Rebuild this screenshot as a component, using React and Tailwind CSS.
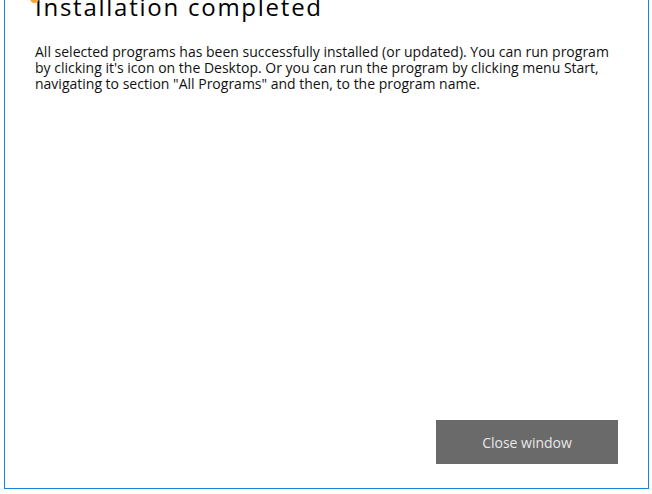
import React from 'react';

const App = () => {
    return (
        <div className="w-[652px] h-[494px] bg-white overflow-hidden" style={{ fontFamily: '"Open Sans", "Noto Sans", sans-serif' }}>
            {/* Window frame, top edge is outside the capture */}
            <div className="relative ml-[4px] w-[645px] h-[489px] border-x border-b border-[#1883d7] flex flex-col">
                {/* cropped app icon peeking in at the top */}
                <div className="absolute left-[25px] top-[-6px] w-[9px] h-[9px] rounded-full bg-[#f6a53a]" />

                <div className="pl-[30px] pr-[20px]">
                    <h1 className="mt-[-9px] text-[24px] leading-[32px] font-normal text-black tracking-[1.75px]">
                        Installation completed
                    </h1>
                    <p className="mt-[21px] text-[14px] leading-[16px] text-[#111] whitespace-nowrap">
                        All selected programs has been successfully installed (or updated). You can run program<br />
                        by clicking it's icon on the Desktop. Or you can run the program by clicking menu Start,<br />
                        navigating to section "All Programs" and then, to the program name.
                    </p>
                </div>

                <div className="mt-auto flex justify-end pr-[30px] pb-[24px]">
                    <button className="w-[182px] h-[44px] bg-[#6a6a6a] text-[#e8e8e8] text-[14px]">
                        Close window
                    </button>
                </div>
            </div>
        </div>
    );
};

export default App;
